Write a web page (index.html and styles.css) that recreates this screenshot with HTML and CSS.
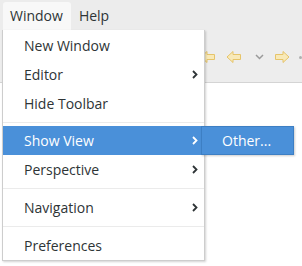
FILE: index.html
```html
<!DOCTYPE html>
<html>
<head>
<meta charset="utf-8">
<link rel="stylesheet" href="styles.css">
</head>
<body>
<div class="menubar">
  <div class="mb-item active">Window</div>
  <div class="mb-item">Help</div>
</div>
<div class="toolbar">
  <svg class="tb-icon back1" width="16" height="14" viewBox="0 0 16 14"><path d="M1 7 L7 1.5 V4.5 H14.5 V9.5 H7 V12.5 Z" fill="#f8e9b8" stroke="#e6c46a" stroke-width="1"/></svg>
  <svg class="tb-icon back2" width="16" height="14" viewBox="0 0 16 14"><path d="M1 7 L7 1.5 V4.5 H14.5 V9.5 H7 V12.5 Z" fill="#f8e9b8" stroke="#e6c46a" stroke-width="1"/></svg>
  <svg class="tb-icon chev" width="9" height="6" viewBox="0 0 9 6"><path d="M1 1 L4.5 4.5 L8 1" fill="none" stroke="#9a9a9a" stroke-width="1.5"/></svg>
  <svg class="tb-icon fwd" width="16" height="14" viewBox="0 0 16 14"><path d="M15 7 L9 1.5 V4.5 H1.5 V9.5 H9 V12.5 Z" fill="#f8e9b8" stroke="#e6c46a" stroke-width="1"/></svg>
  <span class="tb-dot"></span>
</div>
<div class="content"></div>

<div class="menu">
  <div class="item">New Window</div>
  <div class="item">Editor<svg class="arrow" width="6" height="9" viewBox="0 0 6 9"><path d="M1 1 L4.5 4.5 L1 8" fill="none" stroke="#2e3436" stroke-width="1.8"/></svg></div>
  <div class="item">Hide Toolbar</div>
  <div class="sep"></div>
  <div class="item selected">Show View<svg class="arrow" width="6" height="9" viewBox="0 0 6 9"><path d="M1 1 L4.5 4.5 L1 8" fill="none" stroke="#ffffff" stroke-width="1.8"/></svg></div>
  <div class="item">Perspective<svg class="arrow" width="6" height="9" viewBox="0 0 6 9"><path d="M1 1 L4.5 4.5 L1 8" fill="none" stroke="#2e3436" stroke-width="1.8"/></svg></div>
  <div class="sep wide"></div>
  <div class="item">Navigation<svg class="arrow" width="6" height="9" viewBox="0 0 6 9"><path d="M1 1 L4.5 4.5 L1 8" fill="none" stroke="#2e3436" stroke-width="1.8"/></svg></div>
  <div class="sep wide"></div>
  <div class="item">Preferences</div>
</div>

<div class="submenu">
  <div class="sub-item">Other...</div>
</div>
</body>
</html>
```

FILE: styles.css
```css
html, body {
  margin: 0;
  padding: 0;
}
body {
  width: 302px;
  height: 266px;
  overflow: hidden;
  background: #ffffff;
  font-family: "Open Sans", "Noto Sans", sans-serif;
  font-size: 14px;
  color: #2e3436;
  position: relative;
}
.menubar {
  height: 30px;
  background: #ececec;
  display: flex;
  align-items: flex-end;
  padding-left: 3px;
  box-sizing: border-box;
}
.mb-item {
  height: 28px;
  line-height: 28px;
  padding: 0 8px 0 7px;
  margin-right: 1px;
}
.mb-item.active {
  background: #f8f8f8;
  border-radius: 3px 3px 0 0;
}
.toolbar {
  height: 53px;
  background: #ededed;
  border-bottom: 1px solid #d4d4d4;
  display: flex;
  align-items: center;
  justify-content: flex-end;
  box-sizing: border-box;
  padding-top: 2px;
}
.tb-icon {
  flex: none;
}
.back1 { margin-right: 10px; }
.back2 { margin-right: 13px; }
.chev { margin-right: 10px; }
.fwd { margin-right: 9px; }
.tb-dot {
  width: 3px;
  height: 3px;
  background: #b0b0b0;
  border-radius: 50%;
}
.menu {
  position: absolute;
  left: 2px;
  top: 30px;
  width: 201px;
  background: #ffffff;
  border: 1px solid #cdcdcd;
  border-top: none;
  box-shadow: 1px 1px 2px rgba(0,0,0,0.18);
  padding-top: 1px;
}
.item {
  height: 29px;
  display: flex;
  align-items: center;
  padding-left: 21px;
  padding-right: 6px;
  position: relative;
}
.item.selected {
  background: #4a90d9;
  color: #ffffff;
}
.arrow {
  margin-left: auto;
}
.sep {
  height: 8px;
  display: flex;
  align-items: center;
}
.sep.wide {
  height: 9px;
}
.sep::before {
  content: "";
  flex: 1;
  height: 1px;
  background: #ebebeb;
}
.submenu {
  position: absolute;
  left: 201px;
  top: 126px;
  width: 93px;
  background: #4a90d9;
  border: 1px solid #3d7fc4;
  box-sizing: border-box;
  box-shadow: 1px 1px 2px rgba(0,0,0,0.2);
}
.sub-item {
  height: 27px;
  display: flex;
  align-items: center;
  padding-left: 20px;
  color: #ffffff;
}
```
